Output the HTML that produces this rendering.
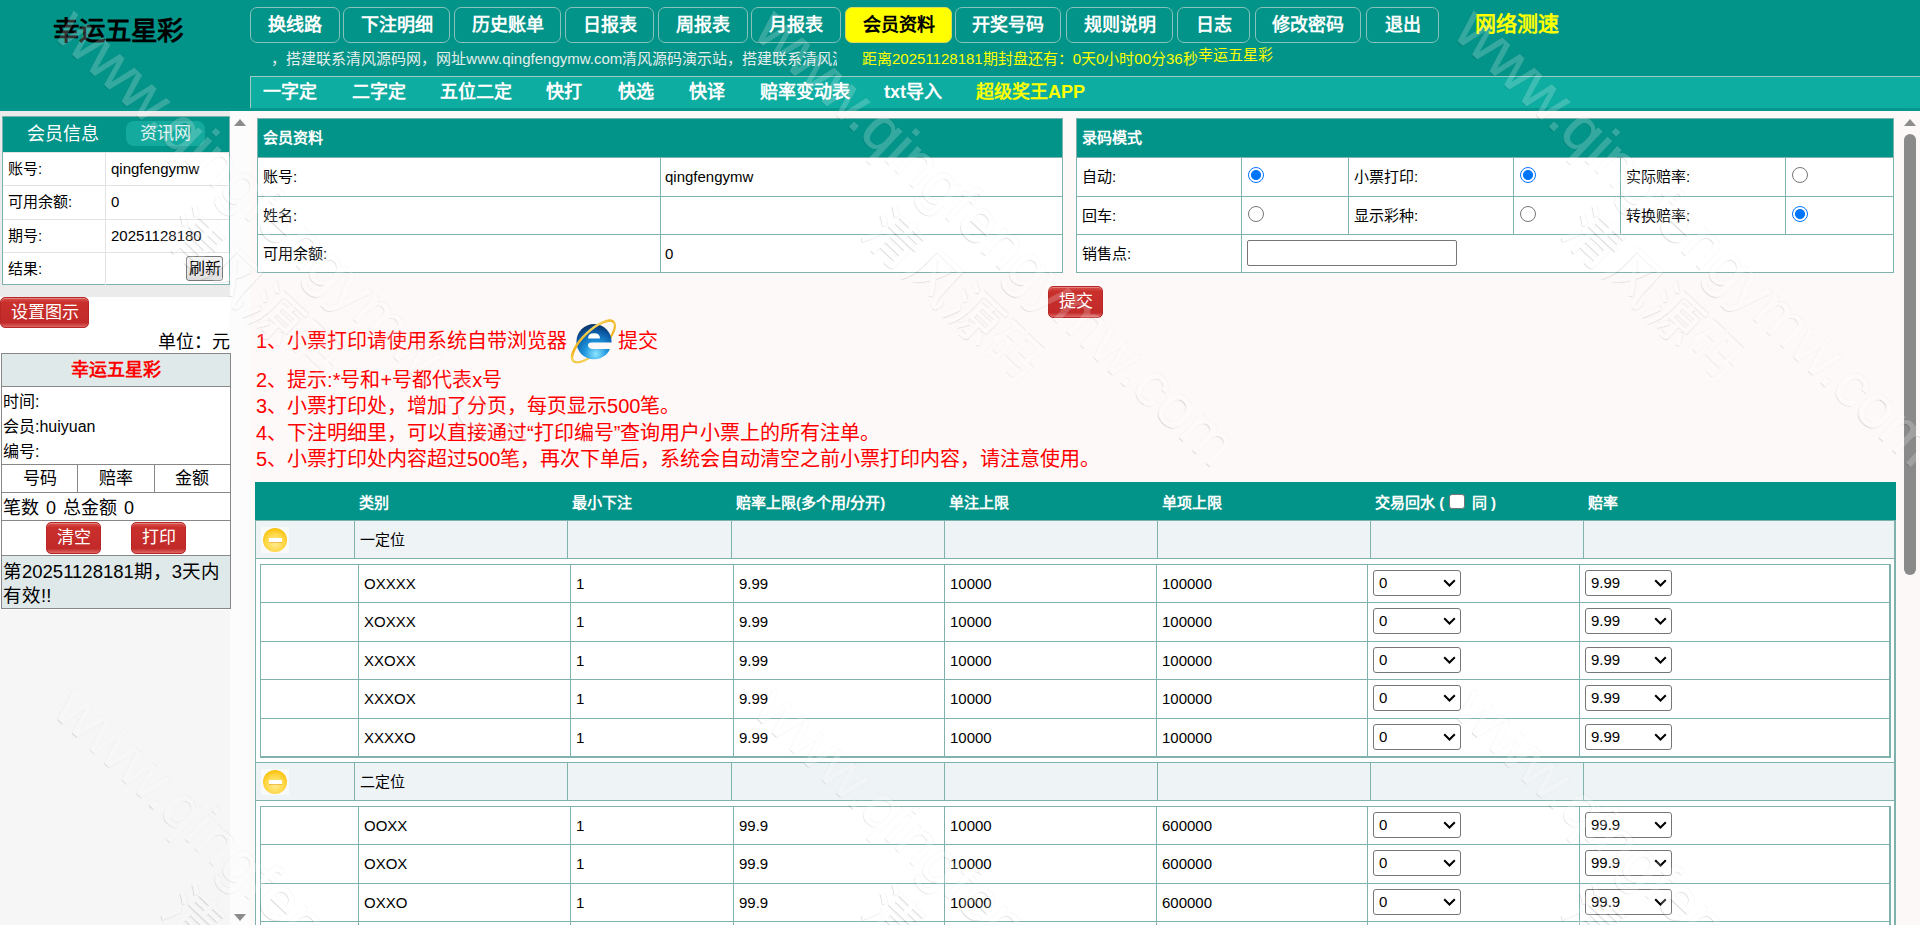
<!DOCTYPE html>
<html lang="zh-CN"><head><meta charset="utf-8">
<style>
*{box-sizing:border-box}
html,body{margin:0;padding:0}
body{width:1920px;height:925px;overflow:hidden;position:relative;background:#fff;font-family:"Liberation Sans",sans-serif;color:#000}
.abs{position:absolute}
#hdr{left:0;top:0;width:1920px;height:108px;background:#029489}
#hdrband{left:0;top:108px;width:1920px;height:3px;background:#08978d}
#logo{left:53px;top:14px;font-size:26.5px;font-weight:bold;color:#000;line-height:34px;white-space:nowrap}
.nb{position:absolute;top:7px;height:36px;border:1px solid #86c2bb;border-radius:7px;color:#fff;font-size:18px;font-weight:bold;text-align:center;line-height:35px;white-space:nowrap}
.nb.on{background:#ffff00;color:#000;border-color:#d8d860}
#speed{left:1475px;top:7px;font-size:21px;font-weight:bold;color:#ffff00;line-height:34px;white-space:nowrap}
#marq{left:263px;top:48px;width:574px;height:22px;overflow:hidden;white-space:nowrap;color:#e6eeec;font-size:15px;line-height:22px}
#cd{left:862px;top:48px;font-size:15px;color:#ffff00;line-height:22px;white-space:nowrap}
#cd2{left:1198px;top:45px;font-size:15px;color:#ffff00;line-height:20px;white-space:nowrap}
#sub{left:250px;top:76px;width:1670px;height:32px;background:#0dada1;border-top:1px solid #9fcac2;border-left:1px solid #9fcac2}
.si{position:absolute;top:81px;font-size:18px;font-weight:bold;color:#fff;line-height:22px;white-space:nowrap}
#left{left:0;top:111px;width:230px;height:814px;background:#f5f5f5}

#lbg1{left:0;top:111px;width:230px;height:186px;background:#ebebeb}
#lbg2{left:0;top:297px;width:230px;height:313px;background:#fff}
#lbg3{left:0;top:610px;width:230px;height:315px;background:#f6f6f6}
#lscroll{left:230px;top:111px;width:20px;height:814px;background:#fcfcfc}
.tri-up{position:absolute;width:0;height:0;border-left:6.5px solid transparent;border-right:6.5px solid transparent;border-bottom:7px solid #8c8c8c}
.tri-dn{position:absolute;width:0;height:0;border-left:6.5px solid transparent;border-right:6.5px solid transparent;border-top:7px solid #8c8c8c}
#mi{left:2px;top:116px;width:228px;height:169px;border:1px solid #7db3ae;background:#fff}
#mih{position:absolute;left:0;top:0;width:226px;height:35px;background:#029489}
#mih .t{position:absolute;left:24px;top:6px;font-size:18px;color:#fff;line-height:22px}
#mih .pill{position:absolute;left:123px;top:4px;width:79px;height:25px;background:#15aa9e;border-radius:8px;color:#e3f3f1;font-size:17px;line-height:25px;text-align:center}
.mr{position:absolute;left:0;width:226px;border-top:1px solid #e3e3e3;font-size:15px}
.mr .k{position:absolute;left:5px;top:0;line-height:32px}
.mr .v{position:absolute;left:108px;top:0;line-height:32px}
.mr .d{position:absolute;left:102px;top:0;width:1px;height:100%;background:#e3e3e3}
.rbtn{position:absolute;border:1px solid #b92626;border-radius:5px;background:linear-gradient(#d9534f 0%,#c9302c 15%,#c22a2a 85%,#d66 100%);color:#fff;text-align:center;box-shadow:inset 0 1px 0 rgba(255,255,255,.3)}
#unit{left:130px;top:330px;width:100px;text-align:right;font-size:18px;line-height:24px;white-space:nowrap;overflow:hidden}
#bs{left:1px;top:353px;width:230px;height:256px;border:1px solid #888;background:#fff}
.bsr{position:absolute;left:0;width:228px;border-top:1px solid #888}
#main{left:250px;top:111px;width:1670px;height:814px;background:#fdf9f8}

.wm{position:absolute;font-size:61px;line-height:71px;text-align:center;transform:rotate(43.25deg);transform-origin:0 0;white-space:nowrap;color:#fff;opacity:.2;-webkit-text-stroke:.9px #fff;text-shadow:0 1.2px .7px rgba(0,0,0,.75),0 -.8px .7px rgba(0,0,0,.3);pointer-events:none}
.wm span{font-size:55px;padding-left:18px}
.bx{position:absolute;background:#fff;border:1px solid #7fb2ad}
.th{position:absolute;left:0;top:0;right:0;background:#029489;color:#fff;font-weight:bold;font-size:15px}
.hl{position:absolute;left:0;right:0;height:1px;background:#7fb2ad}
.vl{position:absolute;top:0;width:1px;background:#7fb2ad}
.tx{position:absolute;font-size:15px;line-height:20px;white-space:nowrap}
.rd{position:absolute;width:16px;height:16px;border-radius:50%;border:1.5px solid #767676;background:#fff}
.rd.on{border:1.5px solid #0075ff;background:radial-gradient(circle,#0075ff 0,#0075ff 4.6px,#fff 5.4px)}
.red{color:#ff0000;font-size:20px;line-height:26px;white-space:nowrap;position:absolute}
.sel svg{position:absolute;right:4px;top:8px}
.sel{position:absolute;width:88px;height:26px;border:1px solid #767676;border-radius:3px;background:#fff;font-size:15px;line-height:24px;padding-left:5px}
.cb{display:inline-block;width:15.5px;height:15.5px;background:#fff;border:1px solid #767676;border-radius:3px;vertical-align:-1px;margin:0 3px 0 5px}
.ic{position:absolute;width:28px;height:26px;background:#f8f9fb}
.ic:before{content:"";position:absolute;left:2px;top:1px;width:24px;height:24px;border-radius:50%;background:radial-gradient(circle at 50% 62%,#ffeb95 0,#ffd94c 45%,#fbc413 72%,#f2a900 92%,#f5b520 100%)}
.ic:after{content:"";position:absolute;left:7.5px;top:11px;width:13.5px;height:4px;background:#fff;box-shadow:0 1px 0 rgba(230,140,0,.45)}
</style></head><body>
<div id="hdr" class="abs"></div>
<div id="hdrband" class="abs"></div>
<div id="logo" class="abs">幸运五星彩</div>
<div class="nb" style="left:250px;width:90px">换线路</div>
<div class="nb" style="left:343px;width:107px">下注明细</div>
<div class="nb" style="left:454px;width:107px">历史账单</div>
<div class="nb" style="left:565px;width:89px">日报表</div>
<div class="nb" style="left:658px;width:90px">周报表</div>
<div class="nb" style="left:751px;width:90px">月报表</div>
<div class="nb on" style="left:845px;width:107px">会员资料</div>
<div class="nb" style="left:955px;width:106px">开奖号码</div>
<div class="nb" style="left:1066px;width:107px">规则说明</div>
<div class="nb" style="left:1177px;width:73px">日志</div>
<div class="nb" style="left:1255px;width:106px">修改密码</div>
<div class="nb" style="left:1366px;width:73px">退出</div>
<div id="speed" class="abs">网络测速</div>
<div id="marq" class="abs">&nbsp;&nbsp;，搭建联系清风源码网，网址www.qingfengymw.com清风源码演示站，搭建联系清风源码网</div>
<div id="cd" class="abs">距离20251128181期封盘还有：0天0小时00分36秒</div>
<div id="cd2" class="abs">幸运五星彩</div>
<div id="sub" class="abs"></div>
<div class="si" style="left:263px">一字定</div>
<div class="si" style="left:352px">二字定</div>
<div class="si" style="left:440px">五位二定</div>
<div class="si" style="left:546px">快打</div>
<div class="si" style="left:618px">快选</div>
<div class="si" style="left:689px">快译</div>
<div class="si" style="left:760px">赔率变动表</div>
<div class="si" style="left:884px">txt导入</div>
<div class="si" style="left:976px;color:#ffff00">超级奖王APP</div>


<div id="lbg1" class="abs"></div>
<div id="lbg2" class="abs"></div>
<div id="lbg3" class="abs"></div>
<div id="lscroll" class="abs"></div>
<div class="tri-up" style="left:234px;top:119px"></div>
<div class="tri-dn" style="left:234px;top:914px"></div>
<div id="mi" class="abs">
 <div id="mih"><span class="t">会员信息</span><span class="pill">资讯网</span></div>
 <div class="mr" style="top:35px;height:33px"><span class="k">账号:</span><span class="d"></span><span class="v">qingfengymw</span></div>
 <div class="mr" style="top:68px;height:34px"><span class="k">可用余额:</span><span class="d"></span><span class="v">0</span></div>
 <div class="mr" style="top:102px;height:33px"><span class="k">期号:</span><span class="d"></span><span class="v">20251128180</span></div>
 <div class="mr" style="top:135px;height:33px"><span class="k">结果:</span><span class="d"></span>
   <span style="position:absolute;left:183px;top:3px;width:37px;height:25px;border:1px solid #777;border-radius:3px;background:linear-gradient(#f6f6f6,#dcdcdc);font-size:16px;line-height:23px;text-align:center">刷新</span></div>
</div>
<div class="rbtn" style="left:0;top:297px;width:89px;height:31px;font-size:17px;line-height:29px">设置图示</div>
<div id="unit" class="abs">单位：元</div>
<div id="bs" class="abs">
 <div style="position:absolute;left:0;top:0;width:228px;height:33px;background:#dfe9e9;color:#f00;font-weight:bold;font-size:18px;line-height:33px;text-align:center">幸运五星彩</div>
 <div class="bsr" style="top:32px;height:79px;font-size:16px;line-height:25px;padding:2px 0 0 1px">时间:<br>会员:huiyuan<br>编号:</div>
 <div class="bsr" style="top:110px;height:28px;font-size:17px;line-height:27px">
   <span style="position:absolute;left:0;width:75px;text-align:center">号码</span>
   <span style="position:absolute;left:75px;top:0;width:1px;height:27px;background:#888"></span>
   <span style="position:absolute;left:76px;width:76px;text-align:center">赔率</span>
   <span style="position:absolute;left:152px;top:0;width:1px;height:27px;background:#888"></span>
   <span style="position:absolute;left:153px;width:74px;text-align:center">金额</span>
 </div>
 <div class="bsr" style="top:138px;height:28px;font-size:18px;line-height:30px;padding-left:1px;word-spacing:2px">笔数 0 总金额 0</div>
 <div class="bsr" style="top:166px;height:35px">
   <div class="rbtn" style="left:44px;top:1px;width:55px;height:32px;font-size:17px;line-height:30px">清空</div>
   <div class="rbtn" style="left:129px;top:1px;width:55px;height:32px;font-size:17px;line-height:30px">打印</div>
 </div>
 <div class="bsr" style="top:201px;height:53px;background:#dfe9e9;font-size:18.5px;line-height:24px;padding:4px 0 0 1px">第20251128181期，3天内有效!!</div>
</div>
<div id="main" class="abs"></div>
<div class="bx" style="left:257px;top:118px;width:806px;height:155px">
<div class="th" style="height:38px"><span style="position:absolute;left:5px;top:9px;line-height:20px">会员资料</span></div>
<div class="hl" style="top:38px"></div>
<div class="hl" style="top:77px"></div>
<div class="hl" style="top:115px"></div>
<div class="vl" style="left:402px;top:38px;height:115px"></div>
<span class="tx" style="left:5px;top:48px">账号:</span>
<span class="tx" style="left:407px;top:48px">qingfengymw</span>
<span class="tx" style="left:5px;top:87px">姓名:</span>
<span class="tx" style="left:5px;top:125px">可用余额:</span>
<span class="tx" style="left:407px;top:125px">0</span>
</div>
<div class="bx" style="left:1076px;top:118px;width:818px;height:155px">
<div class="th" style="height:38px"><span style="position:absolute;left:5px;top:9px;line-height:20px">录码模式</span></div>
<div class="hl" style="top:38px"></div>
<div class="hl" style="top:77px"></div>
<div class="hl" style="top:115px"></div>
<div class="vl" style="left:164px;top:38px;height:115px"></div>
<div class="vl" style="left:271px;top:38px;height:77px"></div>
<div class="vl" style="left:436px;top:38px;height:77px"></div>
<div class="vl" style="left:543px;top:38px;height:77px"></div>
<div class="vl" style="left:708px;top:38px;height:77px"></div>
<span class="tx" style="left:5px;top:48px">自动:</span>
<span class="rd on" style="left:171px;top:48px"></span>
<span class="tx" style="left:277px;top:48px">小票打印:</span>
<span class="rd on" style="left:443px;top:48px"></span>
<span class="tx" style="left:549px;top:48px">实际赔率:</span>
<span class="rd" style="left:715px;top:48px"></span>
<span class="tx" style="left:5px;top:87px">回车:</span>
<span class="rd" style="left:171px;top:87px"></span>
<span class="tx" style="left:277px;top:87px">显示彩种:</span>
<span class="rd" style="left:443px;top:87px"></span>
<span class="tx" style="left:549px;top:87px">转换赔率:</span>
<span class="rd on" style="left:715px;top:87px"></span>
<span class="tx" style="left:5px;top:125px">销售点:</span>
<span style="position:absolute;left:170px;top:121px;width:210px;height:26px;border:1px solid #767676;border-radius:2px;background:#fff"></span>
</div>
<div class="rbtn" style="left:1048px;top:286px;width:55px;height:32px;font-size:17px;line-height:29px">提交</div>
<div class="red" style="left:256px;top:328px">1、小票打印请使用系统自带浏览器</div>
<svg width="56" height="54" viewBox="0 0 56 54" style="position:absolute;left:566px;top:314px">
<defs><radialGradient id="ieg" cx="0.55" cy="0.85" r="0.8"><stop offset="0" stop-color="#8ee6ff"/><stop offset="0.4" stop-color="#1f97de"/><stop offset="0.8" stop-color="#0c5aa6"/><stop offset="1" stop-color="#0a3a70"/></radialGradient>
<linearGradient id="ier" x1="0" y1="1" x2="1" y2="0"><stop offset="0" stop-color="#f6e27a"/><stop offset="0.35" stop-color="#f1b21c"/><stop offset="0.7" stop-color="#f3be2e"/><stop offset="1" stop-color="#fbeeb0"/></linearGradient></defs>
<g transform="rotate(-44 27.5 27.5)"><ellipse cx="27.5" cy="27.5" rx="28" ry="10.5" fill="none" stroke="url(#ier)" stroke-width="2.2"/></g>
<circle cx="28" cy="27.7" r="17.6" fill="url(#ieg)"/>
<path d="M22,24.6 Q22,19.3 28,19.3 Q34,19.3 34,24.6 Z" fill="#fff"/>
<path d="M47,28.6 L25.5,28.6 Q22,28.6 22,31.2 Q22.5,35 27,35 L47,35 Z" fill="#fdf9f8"/>
<g transform="rotate(-44 27.5 27.5)"><path d="M-0.5,27.5 A28,10.5 0 0 1 55.5,27.5" fill="none" stroke="url(#ier)" stroke-width="2.4"/></g>
</svg>
<div class="red" style="left:618px;top:328px">提交</div>
<div class="red" style="left:256px;top:367.0px">2、提示:*号和+号都代表x号</div>
<div class="red" style="left:256px;top:393.3px">3、小票打印处，增加了分页，每页显示500笔。</div>
<div class="red" style="left:256px;top:419.6px">4、下注明细里，可以直接通过“打印编号”查询用户小票上的所有注单。</div>
<div class="red" style="left:256px;top:445.9px">5、小票打印处内容超过500笔，再次下单后，系统会自动清空之前小票打印内容，请注意使用。</div>
<div style="position:absolute;left:255px;top:482px;width:1641px;height:443px;background:#fff;border-left:1px solid #7fb2ad;border-right:2px solid #7fb2ad"></div>
<div style="position:absolute;left:255px;top:482px;width:1641px;height:38px;background:#029489"></div>
<span class="tx" style="left:359px;top:493px;color:#fff;font-weight:bold;font-size:15px">类别</span>
<span class="tx" style="left:572px;top:493px;color:#fff;font-weight:bold;font-size:15px">最小下注</span>
<span class="tx" style="left:736px;top:493px;color:#fff;font-weight:bold;font-size:15px">赔率上限(多个用/分开)</span>
<span class="tx" style="left:949px;top:493px;color:#fff;font-weight:bold;font-size:15px">单注上限</span>
<span class="tx" style="left:1162px;top:493px;color:#fff;font-weight:bold;font-size:15px">单项上限</span>
<span class="tx" style="left:1375px;top:493px;color:#fff;font-weight:bold;font-size:15px">交易回水 (<span class="cb"></span> 同 )</span>
<span class="tx" style="left:1588px;top:493px;color:#fff;font-weight:bold;font-size:15px">赔率</span>
<div style="position:absolute;left:256px;top:520px;width:1638px;height:39px;background:#eef3f6;border-top:1px solid #7fb2ad;border-bottom:1px solid #7fb2ad"></div>
<div class="vl" style="left:354px;top:520px;height:39px"></div>
<div class="vl" style="left:567px;top:520px;height:39px"></div>
<div class="vl" style="left:731px;top:520px;height:39px"></div>
<div class="vl" style="left:944px;top:520px;height:39px"></div>
<div class="vl" style="left:1157px;top:520px;height:39px"></div>
<div class="vl" style="left:1370px;top:520px;height:39px"></div>
<div class="vl" style="left:1583px;top:520px;height:39px"></div>
<div class="ic" style="left:261px;top:527px"></div>
<span class="tx" style="left:360px;top:530px;font-size:15px">一定位</span>
<div style="position:absolute;left:260px;top:564px;width:1631px;height:194px;border:1px solid #7fb2ad;border-bottom-width:2px;border-right-width:2px;background:#fff"></div>
<div class="hl" style="left:260px;width:1629px;top:602px"></div>
<div class="hl" style="left:260px;width:1629px;top:641px"></div>
<div class="hl" style="left:260px;width:1629px;top:679px"></div>
<div class="hl" style="left:260px;width:1629px;top:718px"></div>
<div class="vl" style="left:358px;top:564px;height:192px"></div>
<div class="vl" style="left:570px;top:564px;height:192px"></div>
<div class="vl" style="left:733px;top:564px;height:192px"></div>
<div class="vl" style="left:944px;top:564px;height:192px"></div>
<div class="vl" style="left:1156px;top:564px;height:192px"></div>
<div class="vl" style="left:1367px;top:564px;height:192px"></div>
<div class="vl" style="left:1579px;top:564px;height:192px"></div>
<span class="tx" style="left:364px;top:574px">OXXXX</span>
<span class="tx" style="left:576px;top:574px">1</span>
<span class="tx" style="left:739px;top:574px">9.99</span>
<span class="tx" style="left:950px;top:574px">10000</span>
<span class="tx" style="left:1162px;top:574px">100000</span>
<div class="sel" style="left:1373px;top:570px">0<svg width="13" height="8"><path d="M1.2 1.2 L6.5 6.5 L11.8 1.2" fill="none" stroke="#000" stroke-width="2"/></svg></div>
<div class="sel" style="width:87px;left:1585px;top:570px">9.99<svg width="13" height="8"><path d="M1.2 1.2 L6.5 6.5 L11.8 1.2" fill="none" stroke="#000" stroke-width="2"/></svg></div>
<span class="tx" style="left:364px;top:612px">XOXXX</span>
<span class="tx" style="left:576px;top:612px">1</span>
<span class="tx" style="left:739px;top:612px">9.99</span>
<span class="tx" style="left:950px;top:612px">10000</span>
<span class="tx" style="left:1162px;top:612px">100000</span>
<div class="sel" style="left:1373px;top:608px">0<svg width="13" height="8"><path d="M1.2 1.2 L6.5 6.5 L11.8 1.2" fill="none" stroke="#000" stroke-width="2"/></svg></div>
<div class="sel" style="width:87px;left:1585px;top:608px">9.99<svg width="13" height="8"><path d="M1.2 1.2 L6.5 6.5 L11.8 1.2" fill="none" stroke="#000" stroke-width="2"/></svg></div>
<span class="tx" style="left:364px;top:651px">XXOXX</span>
<span class="tx" style="left:576px;top:651px">1</span>
<span class="tx" style="left:739px;top:651px">9.99</span>
<span class="tx" style="left:950px;top:651px">10000</span>
<span class="tx" style="left:1162px;top:651px">100000</span>
<div class="sel" style="left:1373px;top:647px">0<svg width="13" height="8"><path d="M1.2 1.2 L6.5 6.5 L11.8 1.2" fill="none" stroke="#000" stroke-width="2"/></svg></div>
<div class="sel" style="width:87px;left:1585px;top:647px">9.99<svg width="13" height="8"><path d="M1.2 1.2 L6.5 6.5 L11.8 1.2" fill="none" stroke="#000" stroke-width="2"/></svg></div>
<span class="tx" style="left:364px;top:689px">XXXOX</span>
<span class="tx" style="left:576px;top:689px">1</span>
<span class="tx" style="left:739px;top:689px">9.99</span>
<span class="tx" style="left:950px;top:689px">10000</span>
<span class="tx" style="left:1162px;top:689px">100000</span>
<div class="sel" style="left:1373px;top:685px">0<svg width="13" height="8"><path d="M1.2 1.2 L6.5 6.5 L11.8 1.2" fill="none" stroke="#000" stroke-width="2"/></svg></div>
<div class="sel" style="width:87px;left:1585px;top:685px">9.99<svg width="13" height="8"><path d="M1.2 1.2 L6.5 6.5 L11.8 1.2" fill="none" stroke="#000" stroke-width="2"/></svg></div>
<span class="tx" style="left:364px;top:728px">XXXXO</span>
<span class="tx" style="left:576px;top:728px">1</span>
<span class="tx" style="left:739px;top:728px">9.99</span>
<span class="tx" style="left:950px;top:728px">10000</span>
<span class="tx" style="left:1162px;top:728px">100000</span>
<div class="sel" style="left:1373px;top:724px">0<svg width="13" height="8"><path d="M1.2 1.2 L6.5 6.5 L11.8 1.2" fill="none" stroke="#000" stroke-width="2"/></svg></div>
<div class="sel" style="width:87px;left:1585px;top:724px">9.99<svg width="13" height="8"><path d="M1.2 1.2 L6.5 6.5 L11.8 1.2" fill="none" stroke="#000" stroke-width="2"/></svg></div>
<div class="hl" style="left:256px;width:1638px;top:762px"></div>
<div style="position:absolute;left:256px;top:762px;width:1638px;height:39px;background:#eef3f6;border-top:1px solid #7fb2ad;border-bottom:1px solid #7fb2ad"></div>
<div class="vl" style="left:354px;top:762px;height:39px"></div>
<div class="vl" style="left:567px;top:762px;height:39px"></div>
<div class="vl" style="left:731px;top:762px;height:39px"></div>
<div class="vl" style="left:944px;top:762px;height:39px"></div>
<div class="vl" style="left:1157px;top:762px;height:39px"></div>
<div class="vl" style="left:1370px;top:762px;height:39px"></div>
<div class="vl" style="left:1583px;top:762px;height:39px"></div>
<div class="ic" style="left:261px;top:769px"></div>
<span class="tx" style="left:360px;top:772px;font-size:15px">二定位</span>
<div style="position:absolute;left:260px;top:806px;width:1631px;height:194px;border:1px solid #7fb2ad;border-bottom-width:2px;border-right-width:2px;background:#fff"></div>
<div class="hl" style="left:260px;width:1629px;top:844px"></div>
<div class="hl" style="left:260px;width:1629px;top:883px"></div>
<div class="hl" style="left:260px;width:1629px;top:921px"></div>
<div class="hl" style="left:260px;width:1629px;top:960px"></div>
<div class="vl" style="left:358px;top:806px;height:192px"></div>
<div class="vl" style="left:570px;top:806px;height:192px"></div>
<div class="vl" style="left:733px;top:806px;height:192px"></div>
<div class="vl" style="left:944px;top:806px;height:192px"></div>
<div class="vl" style="left:1156px;top:806px;height:192px"></div>
<div class="vl" style="left:1367px;top:806px;height:192px"></div>
<div class="vl" style="left:1579px;top:806px;height:192px"></div>
<span class="tx" style="left:364px;top:816px">OOXX</span>
<span class="tx" style="left:576px;top:816px">1</span>
<span class="tx" style="left:739px;top:816px">99.9</span>
<span class="tx" style="left:950px;top:816px">10000</span>
<span class="tx" style="left:1162px;top:816px">600000</span>
<div class="sel" style="left:1373px;top:812px">0<svg width="13" height="8"><path d="M1.2 1.2 L6.5 6.5 L11.8 1.2" fill="none" stroke="#000" stroke-width="2"/></svg></div>
<div class="sel" style="width:87px;left:1585px;top:812px">99.9<svg width="13" height="8"><path d="M1.2 1.2 L6.5 6.5 L11.8 1.2" fill="none" stroke="#000" stroke-width="2"/></svg></div>
<span class="tx" style="left:364px;top:854px">OXOX</span>
<span class="tx" style="left:576px;top:854px">1</span>
<span class="tx" style="left:739px;top:854px">99.9</span>
<span class="tx" style="left:950px;top:854px">10000</span>
<span class="tx" style="left:1162px;top:854px">600000</span>
<div class="sel" style="left:1373px;top:850px">0<svg width="13" height="8"><path d="M1.2 1.2 L6.5 6.5 L11.8 1.2" fill="none" stroke="#000" stroke-width="2"/></svg></div>
<div class="sel" style="width:87px;left:1585px;top:850px">99.9<svg width="13" height="8"><path d="M1.2 1.2 L6.5 6.5 L11.8 1.2" fill="none" stroke="#000" stroke-width="2"/></svg></div>
<span class="tx" style="left:364px;top:893px">OXXO</span>
<span class="tx" style="left:576px;top:893px">1</span>
<span class="tx" style="left:739px;top:893px">99.9</span>
<span class="tx" style="left:950px;top:893px">10000</span>
<span class="tx" style="left:1162px;top:893px">600000</span>
<div class="sel" style="left:1373px;top:889px">0<svg width="13" height="8"><path d="M1.2 1.2 L6.5 6.5 L11.8 1.2" fill="none" stroke="#000" stroke-width="2"/></svg></div>
<div class="sel" style="width:87px;left:1585px;top:889px">99.9<svg width="13" height="8"><path d="M1.2 1.2 L6.5 6.5 L11.8 1.2" fill="none" stroke="#000" stroke-width="2"/></svg></div>
<span class="tx" style="left:364px;top:931px">XOOX</span>
<span class="tx" style="left:576px;top:931px">1</span>
<span class="tx" style="left:739px;top:931px">99.9</span>
<span class="tx" style="left:950px;top:931px">10000</span>
<span class="tx" style="left:1162px;top:931px">600000</span>
<div class="sel" style="left:1373px;top:927px">0<svg width="13" height="8"><path d="M1.2 1.2 L6.5 6.5 L11.8 1.2" fill="none" stroke="#000" stroke-width="2"/></svg></div>
<div class="sel" style="width:87px;left:1585px;top:927px">99.9<svg width="13" height="8"><path d="M1.2 1.2 L6.5 6.5 L11.8 1.2" fill="none" stroke="#000" stroke-width="2"/></svg></div>
<span class="tx" style="left:364px;top:970px">XOXO</span>
<span class="tx" style="left:576px;top:970px">1</span>
<span class="tx" style="left:739px;top:970px">99.9</span>
<span class="tx" style="left:950px;top:970px">10000</span>
<span class="tx" style="left:1162px;top:970px">600000</span>
<div class="sel" style="left:1373px;top:966px">0<svg width="13" height="8"><path d="M1.2 1.2 L6.5 6.5 L11.8 1.2" fill="none" stroke="#000" stroke-width="2"/></svg></div>
<div class="sel" style="width:87px;left:1585px;top:966px">99.9<svg width="13" height="8"><path d="M1.2 1.2 L6.5 6.5 L11.8 1.2" fill="none" stroke="#000" stroke-width="2"/></svg></div>
<div style="position:absolute;left:1900px;top:111px;width:20px;height:814px;background:#fcf8f7"></div>
<div class="tri-up" style="left:1904px;top:119px"></div>
<div style="position:absolute;left:1904px;top:134px;width:12px;height:441px;background:#8a8a8a;border-radius:6px"></div>
<div class="wm" style="left:89.7px;top:-6.1px">www.qingfengymw.com<br><span>清风源码</span></div>
<div class="wm" style="left:89.7px;top:671.9px">www.qingfengymw.com<br><span>清风源码</span></div>
<div class="wm" style="left:789.7px;top:-6.1px">www.qingfengymw.com<br><span>清风源码</span></div>
<div class="wm" style="left:789.7px;top:671.9px">www.qingfengymw.com<br><span>清风源码</span></div>
<div class="wm" style="left:1489.7px;top:-6.1px">www.qingfengymw.com<br><span>清风源码</span></div>
<div class="wm" style="left:1489.7px;top:671.9px">www.qingfengymw.com<br><span>清风源码</span></div>
</body></html>
